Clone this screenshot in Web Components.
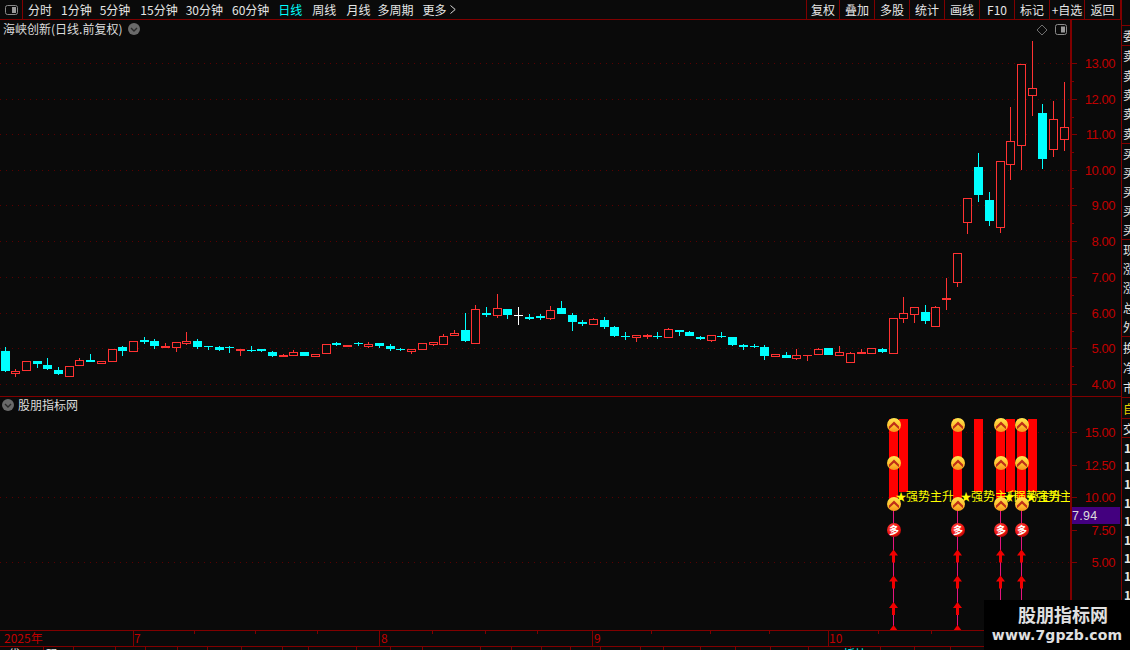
<!DOCTYPE html>
<html lang="zh">
<head>
<meta charset="utf-8">
<title>海峡创新</title>
<style>
html,body{margin:0;padding:0;background:#0a0a0a;overflow:hidden}
body{font-family:"Noto Sans CJK SC","Liberation Sans",sans-serif;color:#e6e6e6}
</style>
</head>
<body>
<app-shell>
  <tool-bar slot="top"></tool-bar>
  <kline-chart slot="main"></kline-chart>
  <signal-chart slot="main"></signal-chart>
  <time-axis slot="main"></time-axis>
  <quote-side slot="side"></quote-side>
  <water-mark slot="over"></water-mark>
</app-shell>
<script>
const FONT='"Noto Sans CJK SC","Liberation Sans",sans-serif';
const NUM='"Liberation Sans",sans-serif';
const AX='#800000',LAB='#c00000',GRID='#5a0000',RED='#ff3232',CY='#00ffff';
const toggleIcon=(x,y)=>`<circle cx="${x}" cy="${y}" r="6" fill="#6a6a6a"/><path d="M${x-3} ${y-1}l3 3 3-3" fill="none" stroke="#2a2a2a" stroke-width="1.4"/>`;

class AppShell extends HTMLElement{
  constructor(){super();this.attachShadow({mode:'open'}).innerHTML=`<style>
  :host{display:grid;grid-template-columns:1121px 9px;width:1130px;height:650px;position:relative;overflow:hidden;background:#0a0a0a}
  .l{display:flex;flex-direction:column;min-width:0}
  </style><div class="l"><slot name="top"></slot><slot name="main"></slot></div><slot name="side"></slot><slot name="over"></slot>`;}
}
class ToolBar extends HTMLElement{
  constructor(){super();
    const left=[['分时',0],['1分钟',9],['5分钟',8],['15分钟',10],['30分钟',8],['60分钟',9],['日线',9,1],['周线',10],['月线',10],['多周期',7],['更多',9]];
    const right=[['复权',33],['叠加',35],['多股',35],['统计',35],['画线',35],['F10',35],['标记',35],['+自选',35],['返回',37]];
    this.attachShadow({mode:'open'}).innerHTML=`<style>
    :host{display:flex;height:20px;box-sizing:border-box;border-bottom:1px solid ${AX};font:12px/19px ${FONT};color:#e6e6e6;white-space:nowrap;background:#0a0a0a}
    .ic{width:23px;box-sizing:border-box;border-right:1px solid ${AX};display:flex;align-items:center;justify-content:center}
    nav{display:flex;flex:1;padding-left:5px;align-items:center}
    nav svg{margin-left:4px}
    .on{color:${CY}}
    .r{display:flex}
    .r span{box-sizing:border-box;border-left:1px solid ${AX};text-align:center}
    .r span:last-child{border-right:1px solid ${AX}}
    </style>
    <div class="ic"><svg width="13" height="10" viewBox="0 0 13 10"><rect x=".5" y=".5" width="12" height="9" rx="2" fill="none" stroke="#8a8a8a"/><rect x="7" y="2" width="4" height="6" fill="#9a9a9a"/></svg></div>
    <nav>${left.map(a=>`<span class="${a[2]?'on':''}" style="margin-left:${a[1]}px">${a[0]}</span>`).join('')}<svg width="6" height="9" viewBox="0 0 6 9"><path d="M.5 .5L5.2 4.5L.5 8.5" fill="none" stroke="#dcdcdc"/></svg></nav>
    <div class="r">${right.map(a=>`<span style="width:${a[1]}px">${a[0]}</span>`).join('')}</div>`;}
}
class KlineChart extends HTMLElement{
  constructor(){super();
    const d=[['c',347,351,371,372],['r',369,371,374,377],['r',361,361,371,371],['c',361,361,364,368],['c',358,365,369,370],['c',367,370,374,375],['r',366,366,377,377],['r',358,360,366,366],['c',354,360,362,362],['r',361,361,364,364],
    ['r',349,349,362,362],['c',346,347,351,356],['r',341,341,352,352],['c',337,340,342,344],['c',339,341,346,349],['R',343,346,348,348],['r',342,342,348,352],['r',332,341,344,345],['c',339,341,347,349],['c',346,346,347,350],
    ['c',346,347,350,351],['c',346,347,348,353],['R',349,349,351,356],['c',346,350,351,352],['c',349,349,351,352],['c',351,352,356,357],['R',354,355,357,357],['r',350,352,356,356],['c',352,352,356,356],['r',354,354,357,357],
    ['r',344,344,354,354],['c',342,343,345,346],['R',345,345,347,347],['c',342,343,344,346],['r',342,344,347,348],['c',343,343,346,348],['c',344,346,349,351],['c',348,349,350,351],['r',349,349,352,354],['r',343,343,350,350],
    ['r',342,342,345,346],['r',334,336,345,345],['r',330,333,336,336],['c',313,330,341,342],['r',305,309,344,344],['c',307,313,315,317],['r',294,308,316,318],['c',309,309,315,319],['w',307,315,316,325],['c',314,317,319,320],
    ['c',314,316,318,320],['r',306,310,319,320],['c',301,308,314,314],['c',313,315,322,331],['c',320,322,324,326],['r',318,319,325,325],['c',317,320,327,329],['c',326,327,336,337],['c',332,336,337,340],['r',335,335,338,342],
    ['R',334,335,337,339],['c',332,336,337,339],['r',328,329,338,338],['c',330,330,332,336],['c',331,332,336,336],['c',336,337,339,340],['r',335,335,341,342],['c',332,336,337,338],['c',337,337,345,346],['c',344,345,347,350],
    ['c',344,346,347,348],['c',345,347,356,360],['r',354,354,357,357],['c',352,355,358,358],['r',349,355,359,360],['R',355,355,356,361],['r',348,349,355,355],['c',348,348,355,355],['r',346,352,356,356],['r',352,353,363,363],
    ['R',349,352,354,354],['r',348,348,354,354],['c',348,349,352,353],['r',318,318,354,354],['r',297,313,319,323],['r',307,307,315,323],['c',305,312,321,324],['r',306,307,327,327],['R',278,298,300,310],['r',253,253,283,287],
    ['r',198,198,223,234],['c',153,167,195,202],['c',192,200,221,226],['r',161,161,228,233],['r',107,141,165,180],['r',64,64,146,170],['r',41,88,96,116],['c',104,113,159,169],['r',101,119,150,157],['r',82,127,140,151]];
    const col={c:CY,r:RED,R:RED,w:'#fff'};
    const candles=d.map((c,i)=>{
      const x=Math.floor(1+10.7*i),[t,wt,a,b,wb]=c,k=col[t],cx=x+4.5;
      let s=`<path d="M${cx} ${wt}V${wb}" stroke="${k}"/>`;
      if(t==='r')s+=`<rect x="${x+.5}" y="${a+.5}" width="8" height="${Math.max(b-a-1,1)}" fill="#0a0a0a" stroke="${k}"/>`;
      else s+=`<rect x="${x}" y="${a}" width="9" height="${b-a}" fill="${k}"/>`;
      return s;}).join('');
    const P=[[13,63],[12,99],[11,134],[10,170],[9,205],[8,241],[7,277],[6,313],[5,348],[4,384]];
    const grid=P.map(p=>`<path d="M0 ${p[1]+.5}H1070" stroke="${GRID}" stroke-dasharray="1 5"/><path d="M1071 ${p[1]+.5}h6" stroke="${AX}"/><path d="M1071 ${p[1]+18.5}h3" stroke="${AX}"/><text x="1115" y="${p[1]+5}" text-anchor="end" fill="${LAB}" font-family='${NUM}' font-size="13" letter-spacing="-.45">${p[0].toFixed(2)}</text>`).join('');
    this.attachShadow({mode:'open'}).innerHTML=`<style>
    :host{display:block;height:377px;position:relative}
    svg{display:block}
    .t{position:absolute;left:3px;top:2px;font:12px/14px ${FONT};color:#dcdcdc;white-space:nowrap}
    </style>
    <svg width="1121" height="377" viewBox="0 20 1121 377" shape-rendering="crispEdges">
      ${grid}${candles}
      <path d="M1070.5 20V397" stroke="${AX}" stroke-width="2"/>
      <path d="M0 396.5H1121" stroke="${AX}" stroke-width="1.5"/>
      <g shape-rendering="auto">${toggleIcon(134,29)}
      <path d="M1042 25l5 5-5 5-5-5z" fill="none" stroke="#6e6e6e"/>
      <rect x="1055.5" y="24.5" width="11" height="10" rx="2" fill="none" stroke="#8a8a8a"/><rect x="1061" y="26.5" width="4" height="6" fill="#9a9a9a"/></g>
    </svg>
    <div class="t">海峡创新(日线.前复权)</div>`;}
}
class SignalChart extends HTMLElement{
  constructor(){super();
    const bars=[[889,500],[899,492],[953,500],[974,492],[996,500],[1006,492],[1017,500],[1028,492]];
    const sig=[894,958,1001,1022];
    const chev=(x,y)=>`<circle cx="${x}" cy="${y}" r="7" fill="url(#gold)"/><path d="M${x-5} ${y+1.5}L${x} ${y-3.5}L${x+5} ${y+1.5}V${y+4.2}L${x} ${y-.3}L${x-5} ${y+4.2}z" fill="#bf2f18"/>`;
    const arrow=(x,y,len)=>`<path d="M${x} ${y}l4.5 6h-3v${len}h-3v-${len}h-3z" fill="#f00000"/>`;
    const col=x=>`<path d="M${x-.5} 510V630" stroke="#e6147f" shape-rendering="crispEdges"/>
      ${arrow(x-.5,549.5,7)}${arrow(x-.5,575.5,7)}${arrow(x-.5,602,7)}${arrow(x-.5,625,0)}
      <circle cx="${x}" cy="530" r="7" fill="url(#ball)"/>
      <text x="${x}" y="534" text-anchor="middle" font-family='${FONT}' font-size="10" fill="#fff" font-weight="700">多</text>
      ${chev(x,425)}${chev(x,463)}`;
    const labels=[897,962,1005,1027].map(x=>`<text y="501" font-family='${FONT}' font-size="12" fill="#ffff00"><tspan x="${x-1.5}" font-size="11">★</tspan><tspan x="${x+9}">强势主升</tspan></text>`).join('');
    const P=[[15,432],[12.5,465],[10,497],[7.5,530],[5,562]];
    const grid=P.map((p,i)=>`${i%2==0?`<path d="M0 ${p[1]+.5}H1070" stroke="${GRID}" stroke-dasharray="1 5"/>`:''}<path d="M1071 ${p[1]+.5}h6" stroke="${AX}"/><text x="1115" y="${p[1]+5}" text-anchor="end" fill="${LAB}" font-family='${NUM}' font-size="13" letter-spacing="-.45">${p[0].toFixed(2)}</text>`).join('');
    this.attachShadow({mode:'open'}).innerHTML=`<style>
    :host{display:block;height:233px;position:relative}
    svg{display:block}
    .t{position:absolute;left:18px;top:0;font:12px/15px ${FONT};color:#dcdcdc;white-space:nowrap}
    </style>
    <svg width="1121" height="233" viewBox="0 397 1121 233">
      <defs>
        <linearGradient id="gold" x1="0" y1="0" x2="0" y2="1"><stop offset="0" stop-color="#ffe650"/><stop offset=".55" stop-color="#ffc22e"/><stop offset="1" stop-color="#f5921c"/></linearGradient>
        <radialGradient id="ball" cx=".4" cy=".35" r=".7"><stop offset="0" stop-color="#ff5a4a"/><stop offset=".7" stop-color="#ee1010"/><stop offset="1" stop-color="#a80808"/></radialGradient>
        <clipPath id="plot"><rect x="0" y="397" width="1070" height="233"/></clipPath>
      </defs>
      <g shape-rendering="crispEdges">${grid}
      ${bars.map(b=>`<rect x="${b[0]}" y="419" width="9" height="${b[1]-419}" fill="#ff0000"/>`).join('')}</g>
      ${sig.map(col).join('')}
      <g clip-path="url(#plot)">${labels}</g>
      ${sig.map(x=>chev(x,504)).join('')}
      <g shape-rendering="crispEdges"><rect x="1071" y="507" width="49" height="17" fill="#43007f"/>
      <path d="M1070.5 397V630" stroke="${AX}" stroke-width="2"/></g>
      <text x="1072" y="519.5" font-family='${NUM}' font-size="12.5" letter-spacing=".3" fill="#dcdcdc">7.94</text>
      ${toggleIcon(8,405)}
    </svg>
    <div class="t">股朋指标网</div>`;}
}
class TimeAxis extends HTMLElement{
  constructor(){super();
    const lab=[['2025年',4],['7',134],['8',381],['9',594],['10',829]];
    const div=[133,379,592,828];
    const top=[194,255,317,432,485,537,651,710,769,878,931];
    const bot=[43,73,115,145,177,207,241,282,308,356,390,422,480,511,541,570,600,640,663,700,735,770,808,850,880,914,950];
    this.attachShadow({mode:'open'}).innerHTML=`<style>:host{display:block;height:20px}svg{display:block}</style>
    <svg width="1121" height="20" viewBox="0 630 1121 20">
      <g shape-rendering="crispEdges" stroke="${AX}">
      <path d="M0 630.5H1121M0 646.5H1121"/>
      ${div.map(x=>`<path d="M${x+.5} 630V646"/>`).join('')}
      ${top.map(x=>`<path d="M${x+.5} 631v3"/>`).join('')}
      ${bot.map(x=>`<path d="M${x+.5} 647v3"/>`).join('')}</g>
      ${lab.map(l=>`<text x="${l[1]}" y="643" font-family='${FONT}' font-size="12" fill="${LAB}">${l[0]}</text>`).join('')}
      <text x="8" y="659" font-family='${FONT}' font-size="12" fill="#e6e6e6">代</text>
      <text x="46" y="659" font-family='${FONT}' font-size="12" fill="#e6e6e6">码</text>
      <text x="843" y="659" font-family='${FONT}' font-size="12" fill="${CY}">板块</text>
    </svg>`;}
}
class QuoteSide extends HTMLElement{
  constructor(){super();
    const g=(h,items,cl='')=>`<div class="g ${cl}" style="height:${h}px">${items.map(t=>`<div class="c" style="height:${h/items.length}px">${t}</div>`).join('')}</div>`;
    const nums=['13.20','12.84','12.61','12.40','12.05','11.96','11.72','11.50','11.21','10.98','10.77'];
    this.attachShadow({mode:'open'}).innerHTML=`<style>
    :host{display:block;width:9px;height:650px;box-sizing:border-box;border-left:1px solid ${AX};overflow:hidden;font:12px/19px ${FONT};color:#e6e6e6}
    .g{box-sizing:content-box;border-bottom:1px solid ${AX};overflow:hidden}
    .c{padding-left:1px;white-space:nowrap;overflow:hidden;display:flex;align-items:center}
    .y{color:#e6d200}
    .n .c{padding-left:2px;font-weight:700}
    .n{border:0}
    </style>
    ${g(25,[''])}${g(19,['委'])}${g(97,['卖','卖','卖','卖','卖'])}${g(95,['买','买','买','买','买'])}${g(96,['现','涨','涨','总','外'])}${g(60,['换','净','市'])}${g(20,['自'],'y')}${g(18,['交'])}
    <div class="g n">${nums.map(n=>`<div class="c" style="height:18.4px">${n}</div>`).join('')}</div>`;}
}
class WaterMark extends HTMLElement{
  constructor(){super();this.attachShadow({mode:'open'}).innerHTML=`<style>
    :host{position:absolute;left:984px;top:600px;width:146px;height:50px;background:#000;display:flex;flex-direction:column;align-items:center;color:#e0e0e0;white-space:nowrap}
    .a{font:700 18px/22px ${FONT};margin-top:3px;margin-left:12px}
    .b{font:700 14px/18px "DejaVu Sans",sans-serif;letter-spacing:.1px;margin-top:1px}
    </style><div class="a">股朋指标网</div><div class="b">www.7gpzb.com</div>`;}
}
customElements.define('app-shell',AppShell);
customElements.define('tool-bar',ToolBar);
customElements.define('kline-chart',KlineChart);
customElements.define('signal-chart',SignalChart);
customElements.define('time-axis',TimeAxis);
customElements.define('quote-side',QuoteSide);
customElements.define('water-mark',WaterMark);
</script>
</body>
</html>
